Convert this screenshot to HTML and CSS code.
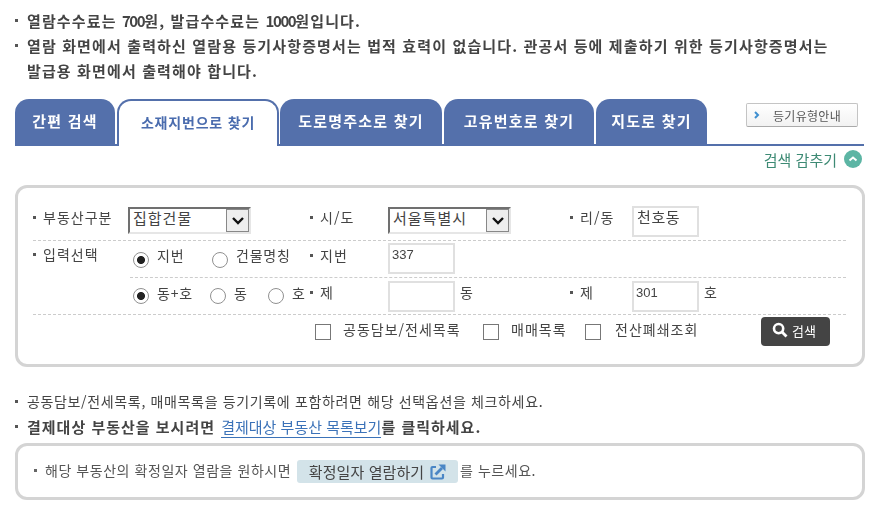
FILE: index.html
```html
<!DOCTYPE html>
<html lang="ko">
<head>
  <meta charset="UTF-8" />
  <title>등기사항증명서 열람</title>
  <link rel="stylesheet" href="styles.css">
</head>
<body>

  <ul class="notes">
    <li>열람수수료는 <span class="num">700</span>원, 발급수수료는 <span class="num">1000</span>원입니다.</li>
    <li>열람 화면에서 출력하신 열람용 등기사항증명서는 법적 효력이 없습니다. 관공서 등에 제출하기 위한 등기사항증명서는<br>발급용 화면에서 출력해야 합니다.</li>
  </ul>

  <div class="tabs">
    <a class="tab tab-1" href="#">간편 검색</a>
    <a class="tab tab-2 active" href="#">소재지번으로 찾기</a>
    <a class="tab tab-3" href="#">도로명주소로 찾기</a>
    <a class="tab tab-4" href="#">고유번호로 찾기</a>
    <a class="tab tab-5" href="#">지도로 찾기</a>
    <a class="guide-btn" href="#">
      <svg width="6" height="8" viewBox="0 0 6 8"><path d="M1 1l3 3-3 3" fill="none" stroke="#3f8fd0" stroke-width="2"/></svg>
      <span>등기유형안내</span>
    </a>
  </div>

  <div class="toggle">
    <span>검색 감추기</span>
    <svg width="18" height="18" viewBox="0 0 18 18"><circle cx="9" cy="9" r="9" fill="#5cb5a4"/><path d="M5.5 10.5L9 7.5l3.5 3" fill="none" stroke="#fff" stroke-width="2"/></svg>
  </div>

  <form class="panel">
    <div class="row row-1">
      <span class="label">부동산구분</span>
      <div class="select select-a"><span>집합건물</span><i class="arrow"><svg width="14" height="9" viewBox="0 0 14 9"><path d="M2 2l5 5 5-5" fill="none" stroke="#111" stroke-width="2.4"/></svg></i></div>
      <span class="label">시/도</span>
      <div class="select select-b"><span>서울특별시</span><i class="arrow"><svg width="14" height="9" viewBox="0 0 14 9"><path d="M2 2l5 5 5-5" fill="none" stroke="#111" stroke-width="2.4"/></svg></i></div>
      <span class="label">리/동</span>
      <input class="field wide" value="천호동">
    </div>

    <div class="group">
      <span class="label">입력선택</span>
      <div class="group-rows">
        <div class="row row-2">
          <div class="radios">
            <label class="opt opt-a"><input type="radio" name="kind" checked>지번</label>
            <label class="opt"><input type="radio" name="kind">건물명칭</label>
          </div>
          <span class="label">지번</span>
          <input class="field" value="337">
        </div>
        <div class="row row-3">
          <div class="radios">
            <label class="opt opt-b"><input type="radio" name="unit" checked>동+호</label>
            <label class="opt opt-c"><input type="radio" name="unit">동</label>
            <label class="opt"><input type="radio" name="unit">호</label>
          </div>
          <span class="label">제</span>
          <div class="unit"><input class="field" value=""><span>동</span></div>
          <span class="label">제</span>
          <div class="unit"><input class="field wide" value="301"><span>호</span></div>
        </div>
      </div>
    </div>

    <div class="row-4">
      <label class="check check-a"><input type="checkbox">공동담보/전세목록</label>
      <label class="check check-b"><input type="checkbox">매매목록</label>
      <label class="check check-c"><input type="checkbox">전산폐쇄조회</label>
      <button class="search-btn" type="button">
        <svg width="16" height="16" viewBox="0 0 16 16"><circle cx="6.6" cy="6.6" r="4.6" fill="none" stroke="#fff" stroke-width="2.6"/><path d="M10 10l4.5 4.5" stroke="#fff" stroke-width="2.8"/></svg>
        검색
      </button>
    </div>
  </form>

  <ul class="notes notes-bottom">
    <li>공동담보/전세목록, 매매목록을 등기기록에 포함하려면 해당 선택옵션을 체크하세요.</li>
    <li class="strong">결제대상 부동산을 보시려면 <a href="#">결제대상 부동산 목록보기</a>를 클릭하세요.</li>
  </ul>

  <div class="notice">
    <span class="notice-text">해당 부동산의 확정일자 열람을 원하시면</span>
    <a class="date-btn" href="#">확정일자 열람하기
      <svg width="16" height="16" viewBox="0 0 16 16"><path d="M6 3H2.5a1 1 0 0 0-1 1v9.500a1 1 0 0 0 1 1H12a1 1 0 0 0 1-1V10" fill="none" stroke="#4a86c5" stroke-width="2.2"/><path d="M5.500 10.500L12 4" fill="none" stroke="#4a86c5" stroke-width="2.8"/><path d="M8.500 .5h7v7z" fill="#4a86c5"/></svg>
    </a>
    <span>를 누르세요.</span>
  </div>

</body>
</html>
```

FILE: styles.css
```css
* {
  box-sizing: border-box;
}
body {
  margin: 0;
  width: 880px;
  height: 508px;
  overflow: hidden;
  background: #fff;
  color: #444;
  font-family: "Noto Sans CJK KR", "Liberation Sans", sans-serif;
  font-size: 14px;
  padding: 8px 0 0 15px;
  filter: blur(0.35px);
}
ul {
  list-style: none;
  margin: 0;
  padding: 0;
}

/* notes */
.notes {
  font-weight: bold;
  font-size: 15px;
  line-height: 25px;
  color: #444;
  letter-spacing: 1.13px;
}
.notes .num {
  letter-spacing: -1.4px;
}
.notes li {
  position: relative;
  padding-left: 12px;
  white-space: nowrap;
}
.notes li::before {
  content: "";
  position: absolute;
  left: 0;
  top: 11px;
  width: 3px;
  height: 3px;
  background: #555;
}

/* tabs */
.tabs {
  display: flex;
  align-items: flex-end;
  position: relative;
  width: 849px;
  height: 47px;
  margin-top: 16px;
  border-bottom: 2px solid #5470ab;
  gap: 2px;
}
.tab {
  height: 45px;
  display: flex;
  align-items: center;
  justify-content: center;
  background: #5470ab;
  color: #fff;
  font-weight: bold;
  font-size: 15px;
  letter-spacing: 1.2px;
  text-decoration: none;
  border-radius: 14px 14px 0 0;
  padding-bottom: 2px;
}
.tab-1 { width: 100px; }
.tab-2 { width: 162px; }
.tab-3 { width: 162px; margin-left: -1px; }
.tab-4 { width: 150px; }
.tab-5 { width: 111px; }
.tab.active {
  height: 47px;
  margin-bottom: -2px;
  background: #fff;
  color: #4a6cae;
  font-size: 14px;
  letter-spacing: 0.8px;
  border: 2px solid #5470ab;
  border-bottom: 0;
  padding-bottom: 4px;
}
.guide-btn {
  position: absolute;
  right: 6px;
  top: 4px;
  width: 112px;
  height: 24px;
  display: flex;
  align-items: center;
  gap: 13px;
  padding-left: 7px;
  background: linear-gradient(#fff, #f2f2f2);
  border: 1px solid #c4c4c4;
  border-bottom-color: #aaa;
  border-radius: 2px;
  color: #555;
  font-size: 12px;
  letter-spacing: 0.3px;
  text-decoration: none;
}

.toggle {
  display: flex;
  justify-content: flex-end;
  align-items: center;
  gap: 7px;
  width: 847px;
  height: 26px;
  color: #3d8a74;
  font-size: 15px;
}

/* search panel */
.panel {
  width: 850px;
  height: 182px;
  margin-top: 13px;
  padding: 16px 16px 0 15px;
  border: 3px solid #d4d4d4;
  border-radius: 12px;
  font-size: 14px;
  letter-spacing: 1px;
  color: #444;
}
.label {
  position: relative;
  padding-left: 10px;
}
.label::before {
  content: "";
  position: absolute;
  left: 0;
  top: 9px;
  width: 3px;
  height: 3px;
  background: #555;
}
.row {
  display: grid;
  align-items: start;
  border-bottom: 1px dashed #ccc;
}
.row-1 {
  grid-template-columns: 95px 182px 78px 182px 62px 1fr;
  height: 37px;
  padding-top: 3px;
}
.group {
  display: grid;
  grid-template-columns: 97px 1fr;
  border-bottom: 1px dashed #ccc;
}
.group > .label {
  margin-top: 3px;
}
.group-rows .row {
  grid-template-columns: 180px 78px 182px 62px 1fr;
}
.row-2 {
  height: 37px;
  padding-top: 2px;
}
.row-2 .label {
  margin-top: 2px;
}
.row-3 {
  height: 36px;
  padding-top: 3px;
  border-bottom: 0 !important;
}
.row-3 .label {
  margin-top: 1px;
}
.select {
  display: flex;
  align-items: flex-start;
  justify-content: space-between;
  width: 123px;
  height: 27px;
  background: #fff;
  border: 2px solid;
  border-color: #707070 #e6e6e6 #e6e6e6 #707070;
  line-height: 18px;
  font-size: 15px;
  padding-left: 3px;
}
.arrow {
  display: flex;
  align-items: center;
  justify-content: center;
  width: 23px;
  height: 23px;
  background: #eee;
  border: 1px solid #888;
}
.field {
  width: 67px;
  height: 31px;
  border: 2px solid #e0e0e0;
  padding: 0 0 8px 2px;
  font: 13px "Liberation Sans", "Noto Sans CJK KR", sans-serif;
  color: #444;
  outline: 0;
}
.row-1 .field {
  margin-top: -1px;
  padding: 0 0 10px 3px;
  font: 15px/16px "Noto Sans CJK KR", sans-serif;
  letter-spacing: 0.6px;
}
.unit {
  display: flex;
  gap: 5px;
}
.unit span {
  line-height: 22px;
}
.radios {
  display: flex;
  margin-top: 2px;
  padding-left: 3px;
  line-height: 20px;
  letter-spacing: 0.8px;
}
.opt {
  display: flex;
  align-items: flex-start;
  gap: 8px;
  white-space: nowrap;
}
.opt-a { width: 79px; }
.opt-b { width: 77px; }
.opt-c { width: 58px; }
.opt input {
  appearance: none;
  flex: none;
  width: 16px;
  height: 16px;
  margin: 7px 0 0;
  border: 1px solid #909090;
  border-radius: 50%;
  background: #fff;
}
.row-3 .opt input {
  margin-top: 5px;
}
.opt input:checked {
  background: radial-gradient(circle, #222 0 3.6px, #fff 4.4px);
}
.row-4 {
  position: relative;
  height: 44px;
}
.check {
  position: absolute;
  top: 4px;
  display: flex;
  align-items: flex-start;
  gap: 12px;
  line-height: 20px;
  white-space: nowrap;
}
.check input {
  appearance: none;
  width: 16px;
  height: 16px;
  margin: 5px 0 0;
  border: 1px solid #777;
  background: #fff;
}
.check-a { left: 282px; }
.check-b { left: 450px; }
.check-c { left: 552px; gap: 14px; }
.search-btn {
  position: absolute;
  left: 728px;
  top: 2px;
  display: flex;
  align-items: center;
  gap: 4px;
  width: 69px;
  height: 29px;
  padding: 0 0 3px 11px;
  border: 0;
  border-radius: 4px;
  background: #444;
  color: #fff;
  font: 13px "Noto Sans CJK KR", sans-serif;
}

/* bottom */
.notes-bottom {
  margin-top: 22px;
  font-weight: normal;
  font-size: 14px;
  color: #444;
  letter-spacing: 0.65px;
}
.notes-bottom .strong {
  font-weight: bold;
  font-size: 15px;
  letter-spacing: 1px;
}
.notes-bottom a {
  font-weight: normal;
  letter-spacing: 0;
  margin-left: 1px;
  color: #3b72b8;
  text-decoration: none;
  border-bottom: 1px solid #3b72b8;
}
.notice {
  display: flex;
  align-items: center;
  width: 850px;
  height: 57px;
  margin-top: 4px;
  padding: 0 0 3px 27px;
  border: 3px solid #d4d4d4;
  border-radius: 12px;
  font-size: 14px;
  letter-spacing: 0.55px;
  color: #555;
}
.notice-text {
  position: relative;
  width: 252px;
}
.notice-text::before {
  content: "";
  position: absolute;
  left: -11px;
  top: 9px;
  width: 3px;
  height: 3px;
  background: #666;
}
.date-btn {
  display: flex;
  align-items: center;
  justify-content: center;
  gap: 6px;
  width: 161px;
  height: 23px;
  margin: 3px 2px 0 0;
  background: #d3e3e9;
  border-radius: 3px;
  color: #444;
  font-size: 15px;
  letter-spacing: 0.1px;
  text-decoration: none;
}
```
